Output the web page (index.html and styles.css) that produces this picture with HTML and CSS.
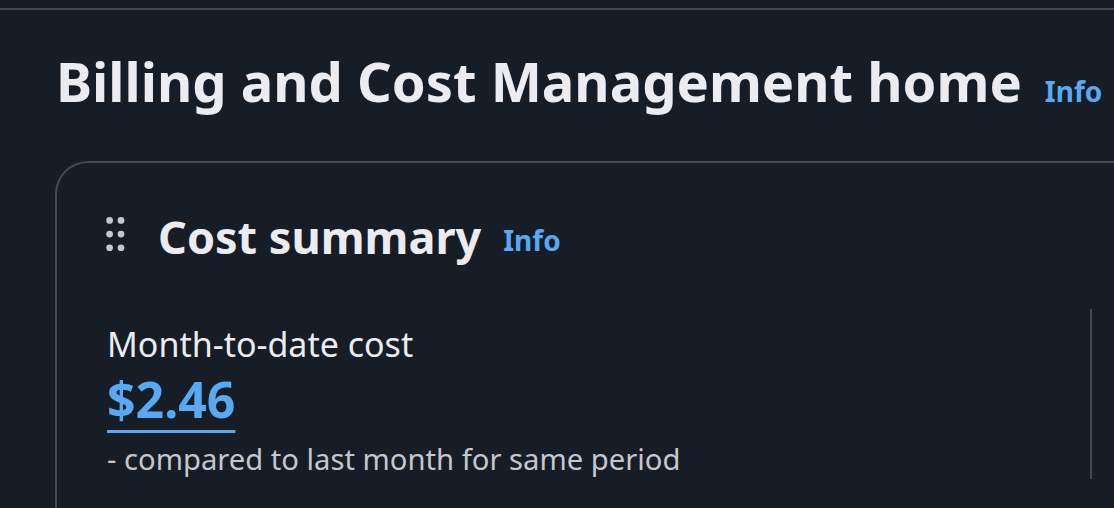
FILE: index.html
```html
<!DOCTYPE html>
<html>
<head>
<meta charset="utf-8">
<link rel="stylesheet" href="styles.css">
</head>
<body>
<div class="topline"></div>
<main class="page">
  <header class="page-header">
    <h1 class="title">Billing and Cost Management home</h1>
    <a class="info info-lg">Info</a>
  </header>
  <section class="card">
    <div class="card-header">
      <svg class="drag" width="19" height="34" viewBox="0 0 19 34">
        <circle cx="3.6" cy="3.4" r="3.4"/><circle cx="15" cy="3.4" r="3.4"/>
        <circle cx="3.6" cy="17.1" r="3.4"/><circle cx="15" cy="17.1" r="3.4"/>
        <circle cx="3.6" cy="30.8" r="3.4"/><circle cx="15" cy="30.8" r="3.4"/>
      </svg>
      <h2 class="card-title">Cost summary</h2>
      <a class="info info-md">Info</a>
    </div>
    <div class="card-body">
      <div class="metric">
        <div class="metric-label">Month-to-date cost</div>
        <a class="metric-value">$2.46</a>
        <div class="metric-note">- compared to last month for same period</div>
      </div>
      <div class="divider"></div>
    </div>
  </section>
</main>
</body>
</html>
```
FILE: styles.css
```css
html, body {
  margin: 0;
  padding: 0;
  background: #161d26;
  overflow: hidden;
  height: 508px;
  font-family: "Noto Sans", "Open Sans", sans-serif;
}
.topline {
  margin-top: 8px;
  height: 2px;
  background: #414750;
}
.page {
  padding-left: 55px;
}
.page-header {
  display: flex;
  align-items: baseline;
  margin-top: 35px;
  white-space: nowrap;
}
.title {
  margin: 0 0 0 1px;
  font-size: 54.3px;
  font-weight: 700;
  color: #ebebf0;
  line-height: 72px;
}
.info {
  color: #58a9f2;
  font-weight: 700;
  text-decoration: none;
}
.info-lg {
  font-size: 28px;
  margin-left: 23px;
}
.card {
  margin-top: 44px;
  border: 2px solid #434a54;
  border-right: none;
  border-bottom: none;
  border-top-left-radius: 33px;
  height: 400px;
  margin-right: -40px;
}
.card-header {
  display: flex;
  align-items: flex-start;
  padding: 44px 0 0 49px;
  white-space: nowrap;
}
.drag {
  fill: #c6c6cd;
  margin: 10px 33px 0 0;
  flex: none;
}
.card-title {
  margin: 0;
  font-size: 45px;
  font-weight: 700;
  color: #ebebf0;
  line-height: 60px;
}
.info-md {
  font-size: 28px;
  line-height: 36px;
  margin: 15px 0 0 22px;
}
.card-body {
  display: flex;
  padding: 42px 0 0 50px;
}
.metric {
  flex: 1;
  padding-top: 13px;
}
.metric-label {
  font-size: 34px;
  color: #ebebf0;
  line-height: 44px;
}
.metric-value {
  display: inline-block;
  font-size: 50px;
  font-weight: 700;
  color: #58a9f2;
  line-height: 66px;
  text-decoration: underline;
  text-decoration-thickness: 3px;
  text-underline-offset: 12px;
}
.metric-note {
  font-size: 29.2px;
  color: #c6c6cd;
  line-height: 54px;
}
.divider {
  flex: none;
  width: 2px;
  height: 170px;
  background: #434a54;
  margin-right: 62px;
}
```
